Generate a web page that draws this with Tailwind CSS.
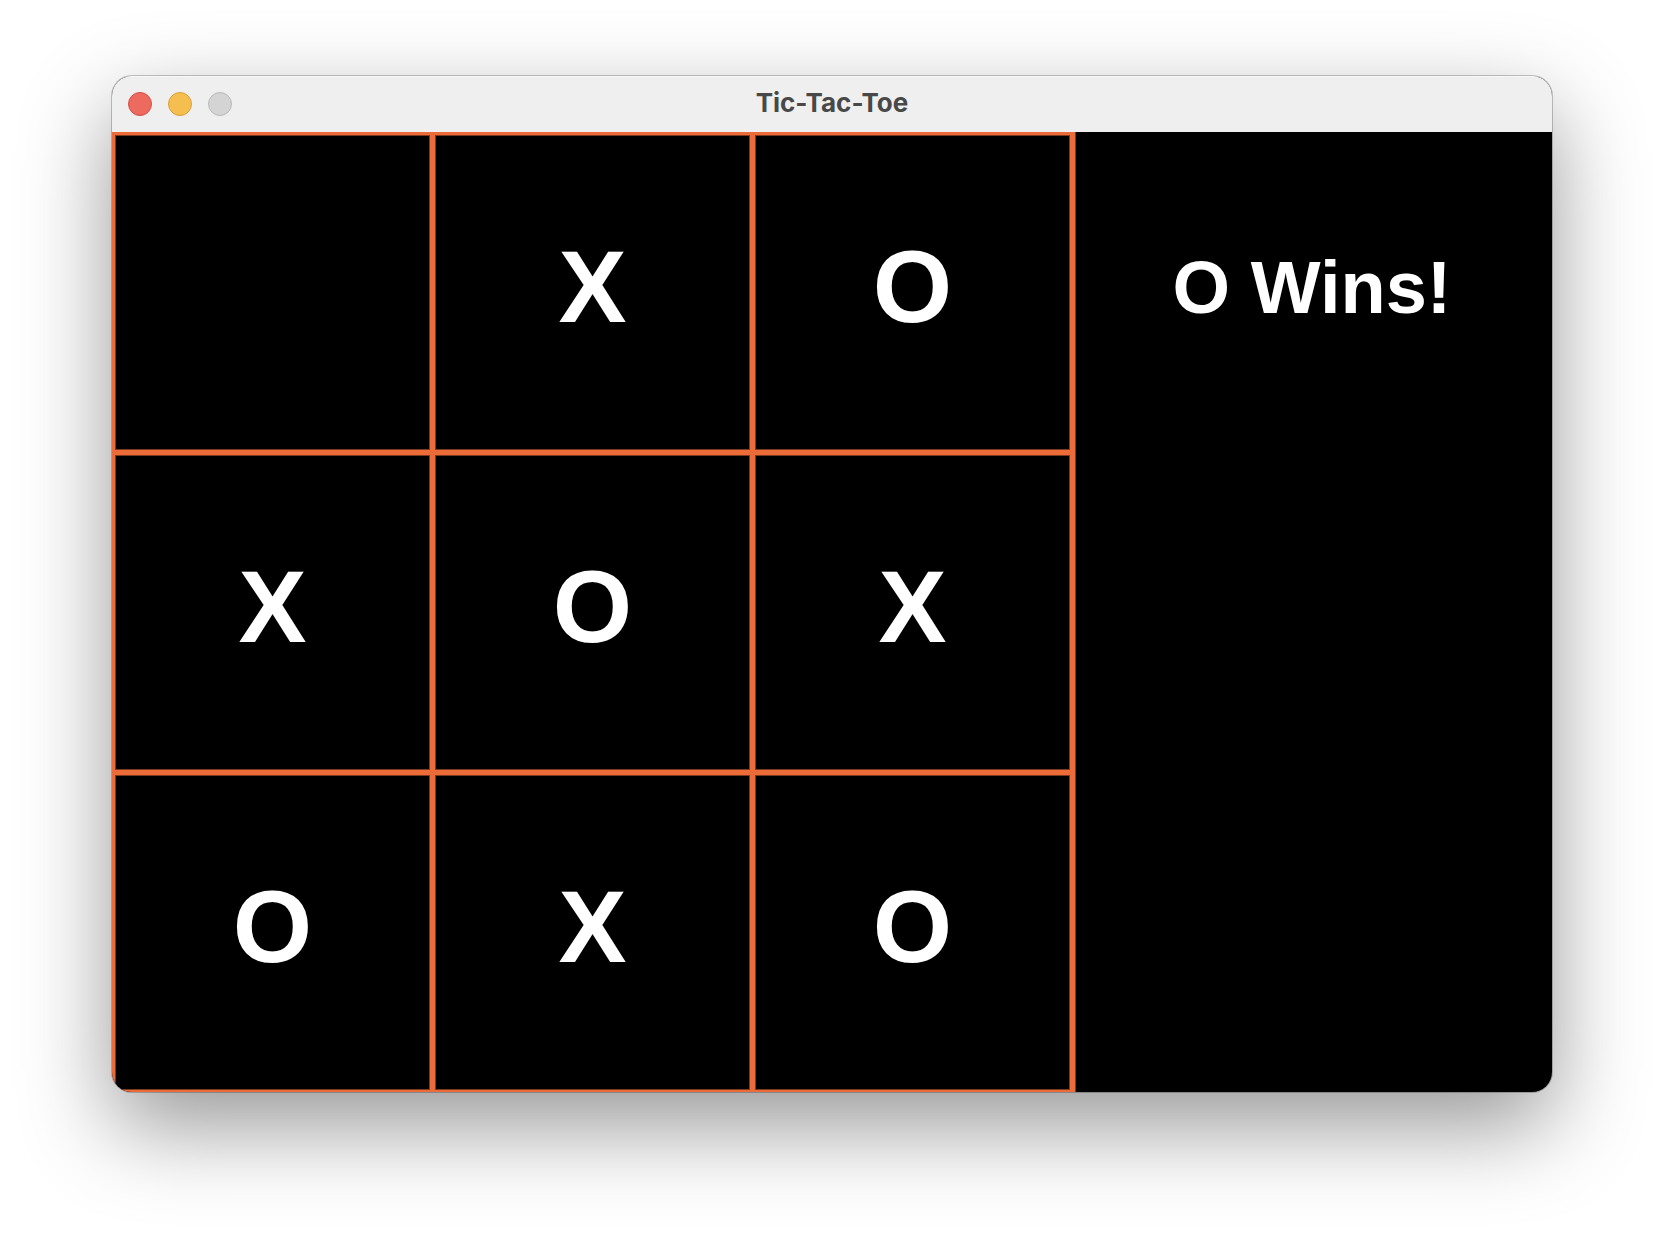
<!DOCTYPE html>
<html lang="en">
<head>
<meta charset="utf-8">
<title>Tic-Tac-Toe</title>
<script src="https://cdn.jsdelivr.net/npm/@tailwindcss/browser@4"></script>
</head>
<body class="min-h-screen bg-white px-28 pt-19 pb-37">
<main class="overflow-hidden rounded-[20px] bg-black shadow-[0_0_0_1px_rgba(0,0,0,0.22),0_34px_90px_rgba(0,0,0,0.41)]">
  <header class="grid h-14 grid-cols-[1fr_auto_1fr] items-center bg-[#efefef] px-4 shadow-[inset_0_1px_0_#f8f8f8]">
    <div class="flex gap-4">
      <button aria-label="Close" class="size-6 rounded-full border border-[#d5504a] bg-[#ec6a5e]"></button>
      <button aria-label="Minimize" class="size-6 rounded-full border border-[#d9a03c] bg-[#f4bf4f]"></button>
      <button aria-label="Zoom" disabled class="size-6 rounded-full border border-[#b9b9b9] bg-[#d4d4d4]"></button>
    </div>
    <h1 class="pb-0.5 font-['Inter',sans-serif] text-[26px] leading-8 font-bold text-[#484848]">Tic-Tac-Toe</h1>
  </header>
  <div class="grid grid-cols-[964fr_476fr] font-['Liberation_Sans',sans-serif] font-bold text-white">
    <section aria-label="Board" class="grid grid-cols-3 gap-[5px] border-r border-[#7b3920] bg-[#eb6b39] pt-[3px] pr-[5px] pb-[2px] pl-[3px] text-[102px] leading-none">
      <button aria-label="Empty" class="aspect-square border border-[#7b3920] bg-black pb-3"></button>
      <button class="aspect-square border border-[#7b3920] bg-black pb-3">X</button>
      <button class="aspect-square border border-[#7b3920] bg-black pb-3">O</button>
      <button class="aspect-square border border-[#7b3920] bg-black pb-3">X</button>
      <button class="aspect-square border border-[#7b3920] bg-black pb-3">O</button>
      <button class="aspect-square border border-[#7b3920] bg-black pb-3">X</button>
      <button class="aspect-square border border-[#7b3920] bg-black pb-3">O</button>
      <button class="aspect-square border border-[#7b3920] bg-black pb-3">X</button>
      <button class="aspect-square border border-[#7b3920] bg-black pb-3">O</button>
    </section>
    <aside class="pt-29 text-center">
      <p role="status" class="pr-1 text-[74px] leading-20 whitespace-nowrap">O Wins!</p>
    </aside>
  </div>
</main>
</body>
</html>
